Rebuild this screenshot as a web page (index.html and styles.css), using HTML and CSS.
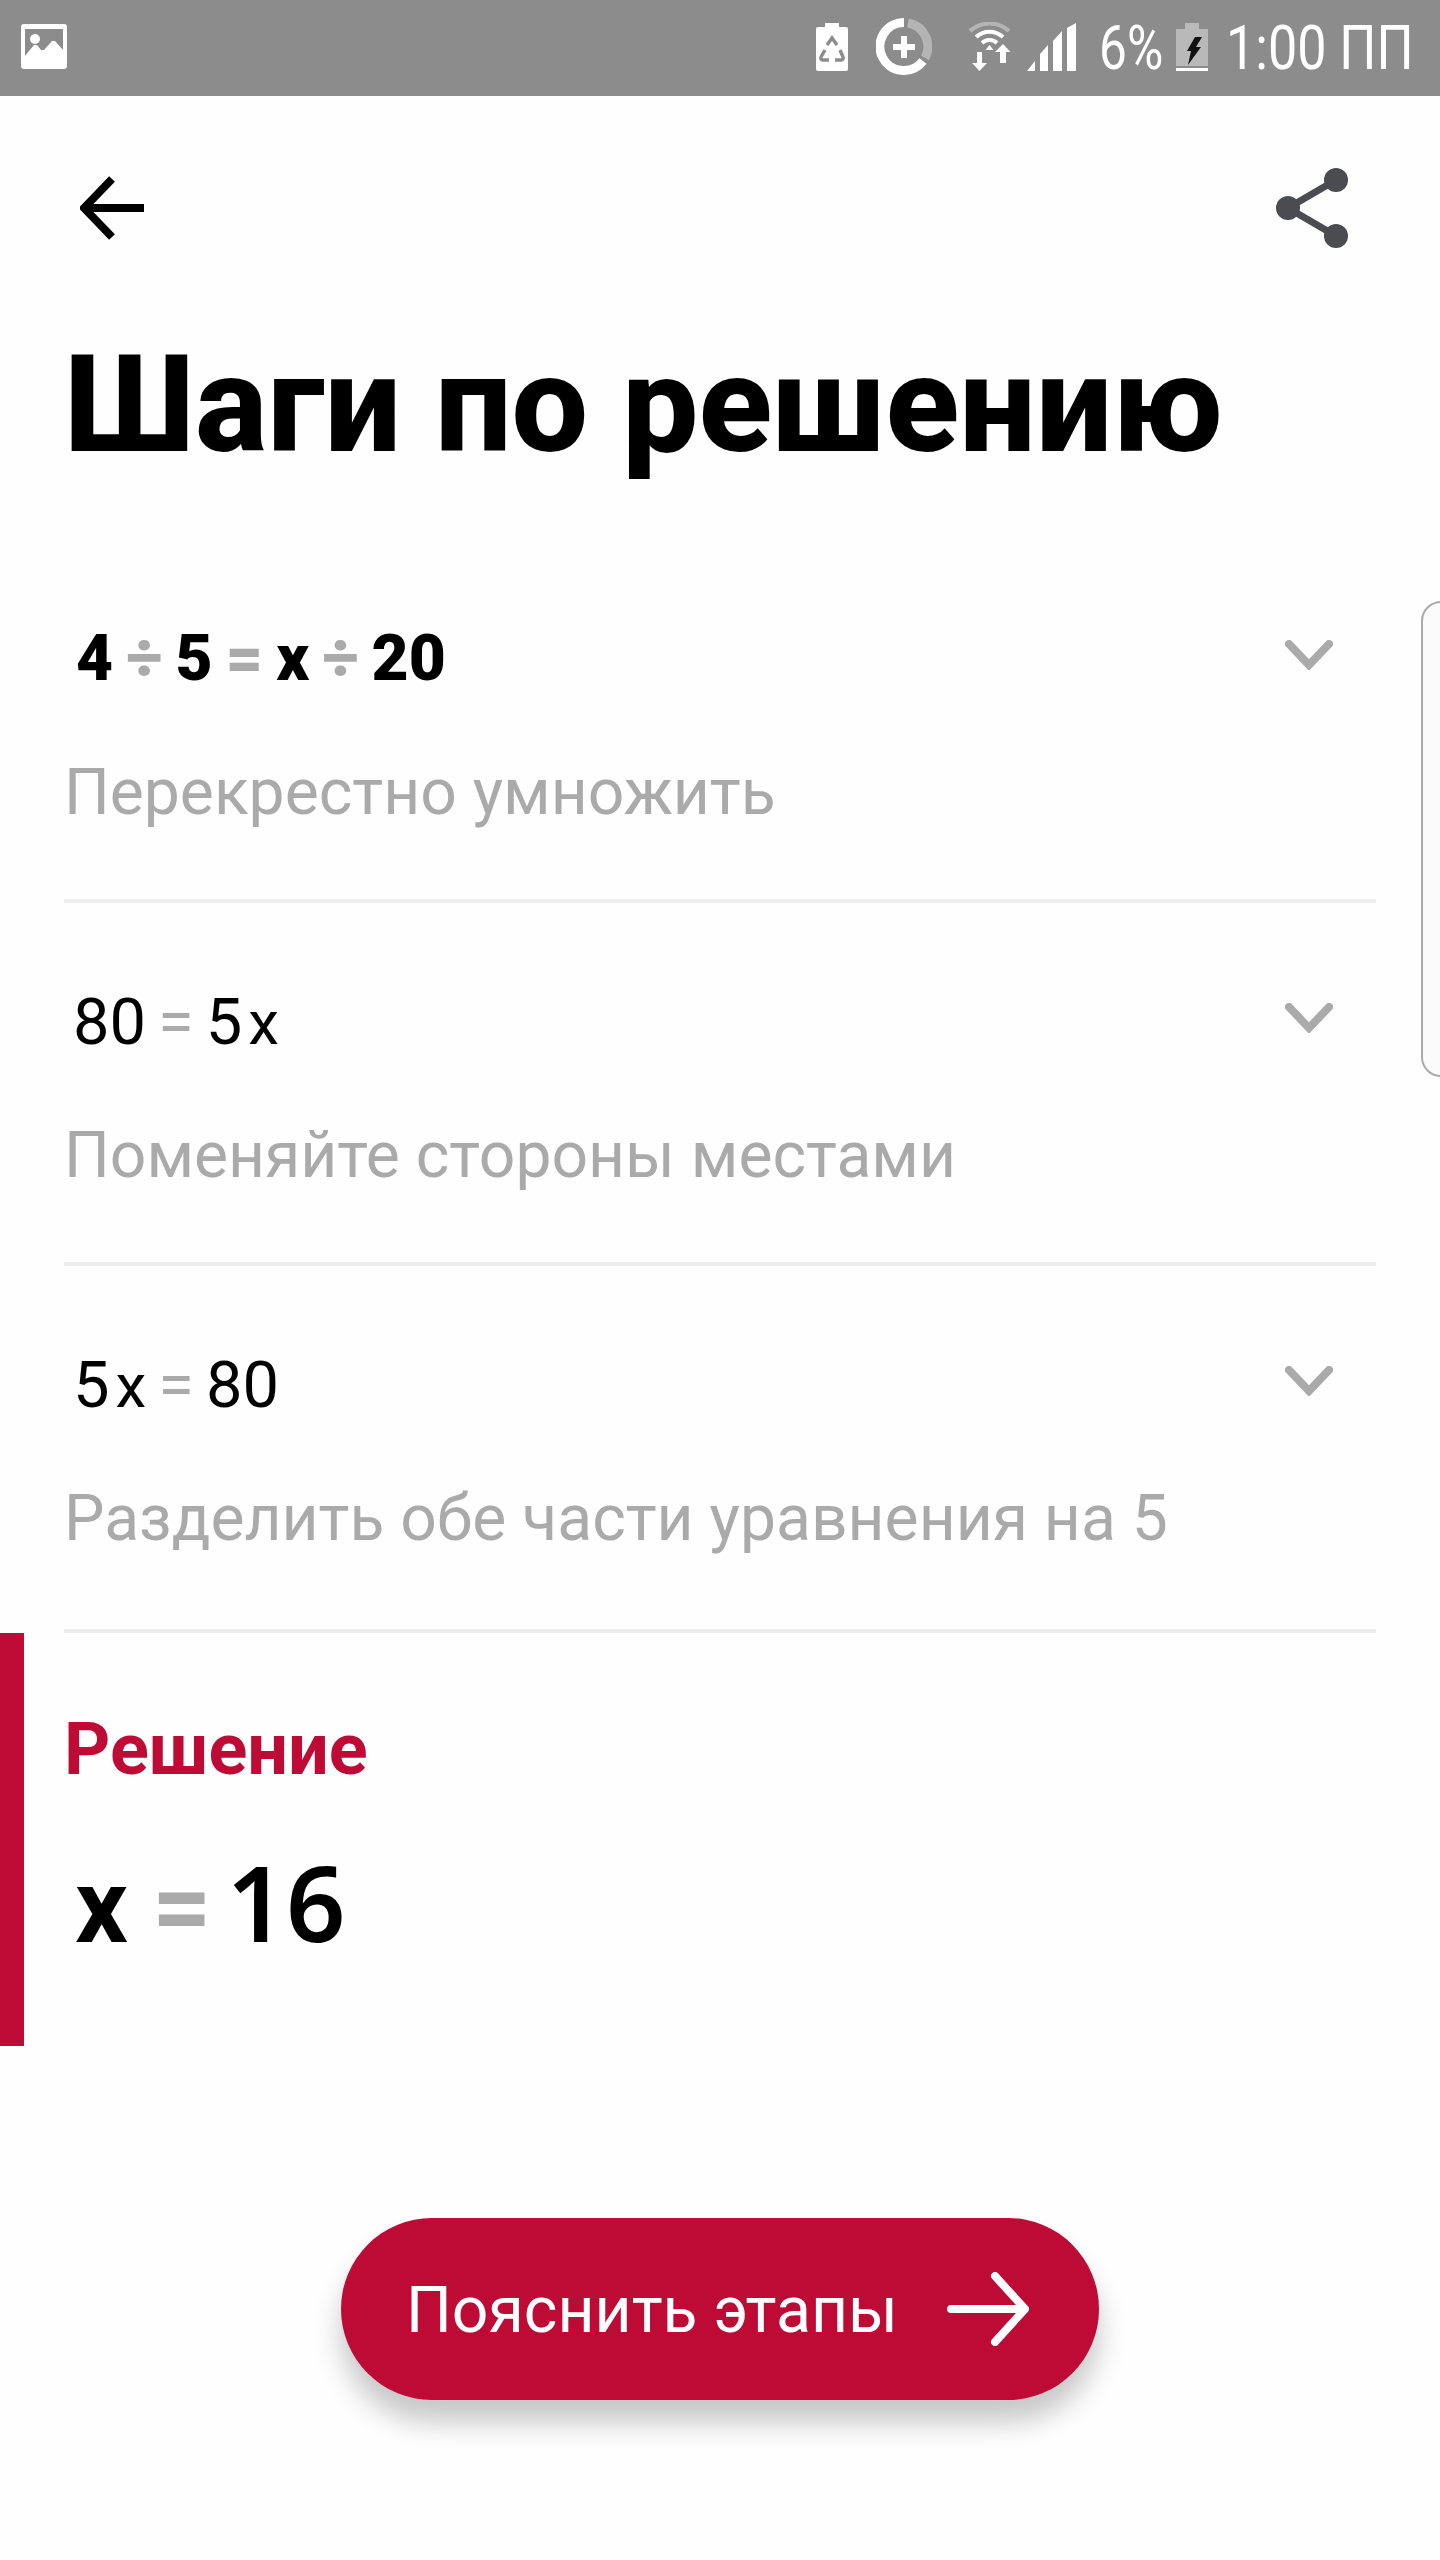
FILE: index.html
```html
<!DOCTYPE html>
<html lang="ru">
<head>
<meta charset="utf-8">
<title>Шаги по решению</title>
<link rel="stylesheet" href="styles.css">
</head>
<body>
<div class="app">
  <header class="status">
    <svg class="ic-image" width="46" height="45" viewBox="0 0 46 45"><path fill="#fff" d="M3 0h40a3 3 0 0 1 3 3v39a3 3 0 0 1-3 3H3a3 3 0 0 1-3-3V3a3 3 0 0 1 3-3z"/><path fill="#8c8c8c" d="M4 5h38v21l-8-9-3 0-8 9-3 0-4-5-3 0-9 11z"/><ellipse cx="14" cy="15" rx="5" ry="5" fill="#fff"/></svg>
    <div class="status-right">
      <svg class="ic-recycle" width="32" height="48" viewBox="0 0 32 48"><path fill="#fff" d="M9 0h14v4h7a2 2 0 0 1 2 2v40a2 2 0 0 1-2 2H2a2 2 0 0 1-2-2V6a2 2 0 0 1 2-2h7z"/><path fill="none" stroke="#8c8c8c" stroke-width="3.4" d="M11 22l5-7 5 7M24 27l3 7a2 2 0 0 1-2 3h-6M13 37H7a2 2 0 0 1-2-3l4-7"/></svg>
      <svg class="ic-dial" width="56" height="57" viewBox="0 0 56 57"><path fill="none" stroke="#fff" stroke-width="9" d="M28 4.500A24 24 0 1 0 47 43"/><path fill="none" stroke="#b4b4b4" stroke-width="9" d="M32 5A24 24 0 0 1 49 40"/><path fill="none" stroke="#fff" stroke-width="6" d="M28 18v22M17 29h22"/></svg>
      <svg class="ic-wifi" width="43" height="49" viewBox="0 0 43 49"><path fill="none" stroke="#b4b4b4" stroke-width="4" d="M2 9C13 -1 30 -1 41 9"/><path fill="none" stroke="#fff" stroke-width="4" d="M8 15C16 8 27 8 35 15M14 21C18 17 25 17 29 21"/><path fill="#fff" d="M21.500 23l4 5h-8zM9 30h5v11h5l-7.500 8L4 41h5zM27 30l8-8 0 0 7.500 8H38v11h-6V30z"/></svg>
      <svg class="ic-signal" width="49" height="48" viewBox="0 0 49 48"><path fill="#fff" d="M0 48l8-10v10zM13 48V31l8-9v26zM26 48V18l9-10v40zM40 48V5l9-5v48z"/></svg>
      <span class="st-pct">6%</span>
      <svg class="ic-batt" width="32" height="48" viewBox="0 0 32 48"><path fill="#b9b9b9" d="M9 0h14v6h9v37H0V6h9z"/><path fill="#fff" d="M0 45h32v3H0z"/><path fill="#111" d="M19 14h7l-6 10h5L12 42l3-14h-4z"/></svg>
      <span class="st-time">1:00 ПП</span>
    </div>
  </header>

  <nav class="toolbar">
    <svg class="ic-back" width="64" height="64" viewBox="0 0 64 64"><path fill="none" stroke="#000" stroke-width="8" d="M64 32H4M32 3L4 32l28 29"/></svg>
    <svg class="ic-share" width="72" height="80" viewBox="0 0 72 80"><path fill="none" stroke="#4a4c52" stroke-width="7" d="M60 12L12 40l48 28"/><circle cx="60" cy="12" r="12" fill="#4a4c52"/><circle cx="12" cy="40" r="12" fill="#4a4c52"/><circle cx="60" cy="68" r="12" fill="#4a4c52"/></svg>
  </nav>

  <h1 class="title">Шаги по решению</h1>

  <section class="steps">
    <article class="step">
      <div class="step-head">
        <div class="math math-bold"><span>4</span><i>÷</i><span>5</span><i>=</i><span>x</span><i>÷</i><span>20</span></div>
        <svg class="chev" width="48" height="30" viewBox="0 0 48 30"><path fill="none" stroke="#aaa" stroke-width="8" stroke-linecap="round" d="M4 4l20 21L44 4"/></svg>
      </div>
      <p class="desc">Перекрестно умножить</p>
    </article>
    <article class="step">
      <div class="step-head">
        <div class="math"><span>80</span><i>=</i><span>5</span><span class="var">x</span></div>
        <svg class="chev" width="48" height="30" viewBox="0 0 48 30"><path fill="none" stroke="#aaa" stroke-width="8" stroke-linecap="round" d="M4 4l20 21L44 4"/></svg>
      </div>
      <p class="desc">Поменяйте стороны местами</p>
    </article>
    <article class="step step-last">
      <div class="step-head">
        <div class="math"><span>5</span><span class="var">x</span><i>=</i><span>80</span></div>
        <svg class="chev" width="48" height="30" viewBox="0 0 48 30"><path fill="none" stroke="#aaa" stroke-width="8" stroke-linecap="round" d="M4 4l20 21L44 4"/></svg>
      </div>
      <p class="desc">Разделить обе части уравнения на 5</p>
    </article>
  </section>

  <section class="solution">
    <h2 class="sol-title">Решение</h2>
    <div class="sol-math"><b>x</b><i>=</i><span>16</span></div>
  </section>

  <div class="action">
    <button class="explain" type="button">
      <span class="explain-label">Пояснить этапы</span>
      <svg width="82" height="74" viewBox="0 0 82 74"><path fill="none" stroke="#fff" stroke-width="8" stroke-linecap="round" stroke-linejoin="round" d="M4 37h72M48 4l30 33-30 33"/></svg>
    </button>
  </div>

  <div class="handle"></div>
</div>
</body>
</html>
```
FILE: styles.css
```css
* { box-sizing: border-box; }
html, body { margin: 0; padding: 0; background: #fff; }
.app {
  position: relative;
  width: 1440px;
  height: 2560px;
  overflow: hidden;
  background: #fefefe;
  font-family: Roboto, "Noto Sans", sans-serif;
  color: #000;
}

/* status bar */
.status {
  height: 96px;
  background: #8c8c8c;
  display: flex;
  align-items: center;
  justify-content: space-between;
  padding: 0 0 0 21px;
}
.ic-image { margin-top: -3px; }
.status-right {
  display: flex;
  align-items: flex-end;
  height: 57px;
  margin-top: -3px;
  width: 624px;
  color: #fff;
  font-weight: 400;
}
.status-right svg { flex: none; }
.ic-recycle { margin-bottom: 4px; }
.ic-dial { margin-left: 28px; }
.ic-wifi { margin-left: 36px; margin-bottom: 4px; }
.ic-signal { margin-left: 16px; margin-bottom: 4px; }
.ic-batt { margin-left: 14px; margin-bottom: 4px; }
.st-pct, .st-time {
  display: block;
  flex: none;
  font-size: 62px;
  line-height: 62px;
  white-space: nowrap;
  transform-origin: left bottom;
}
.st-pct { width: 63px; margin-left: 23px; margin-bottom: -4px; transform: scaleX(.8); }
.st-time { width: 184px; margin-left: 18px; margin-bottom: -4px; transform: scaleX(.84); }

/* toolbar */
.toolbar {
  height: 128px;
  padding: 80px 92px 0 80px;
  display: flex;
  justify-content: space-between;
  align-items: flex-start;
}
.ic-share { margin-top: -8px; }
.title {
  margin: 101px 0 0 64px;
  font-size: 136px;
  line-height: 160px;
  font-weight: 800;
  letter-spacing: 0;
}

/* steps */
.steps {
  margin: 55px 64px 0;
}
.step {
  height: 363px;
  padding-top: 78px;
  border-bottom: 4px solid #ededed;
}
.step-last { height: 367px; }
.step-head {
  height: 80px;
  display: flex;
  justify-content: space-between;
  align-items: center;
  padding-right: 43px;
}
.chev { margin-top: -6px; }
.math {
  display: flex;
  align-items: baseline;
  padding: 2px 0 0 9px;
  font-size: 65px;
  line-height: 80px;
  font-weight: 400;
}
.math i {
  font-style: normal;
  color: #aaa;
  margin: 0 12px;
}
.math .var { margin-left: 6px; font-size: 62px; }
.math-bold {
  padding-left: 12px;
  font-size: 64px;
  font-weight: 900;
}
.math-bold i { margin: 0 13px; }
.desc {
  margin: 54px 0 0;
  font-size: 64.2px;
  line-height: 80px;
  color: #aaa;
}

/* solution */
.solution {
  height: 413px;
  border-left: 24px solid #bd0b35;
  padding: 75px 0 0 40px;
}
.sol-title {
  margin: 0;
  font-size: 72px;
  line-height: 84px;
  font-weight: 700;
  color: #bd0b35;
}
.sol-math {
  display: flex;
  align-items: baseline;
  margin: 50px 0 0 11px;
  font-size: 104px;
  line-height: 120px;
}
.sol-math b { font-weight: 700; }
.sol-math i { font-style: normal; color: #aaa; font-weight: 700; margin: 0 15px 0 24px; }
.sol-math span { font-weight: 600; font-family: "Noto Sans", Roboto, sans-serif; }

/* action button */
.action {
  margin-top: 172px;
  display: flex;
  justify-content: center;
}
.explain {
  width: 758px;
  height: 182px;
  border: 0;
  border-radius: 91px;
  background: #bd0b35;
  color: #fff;
  font-family: Roboto, sans-serif;
  font-size: 64.3px;
  display: flex;
  align-items: center;
  justify-content: space-between;
  padding: 0 70px 0 65px;
  box-shadow: 0 22px 28px rgba(0, 0, 0, .22);
}
.explain-label { padding-top: 2px; }

/* edge panel handle */
.handle {
  position: absolute;
  top: 601px;
  left: 1421px;
  width: 40px;
  height: 476px;
  background: #fbfbfb;
  border: 2px solid #aaa;
  border-radius: 24px;
}
```
